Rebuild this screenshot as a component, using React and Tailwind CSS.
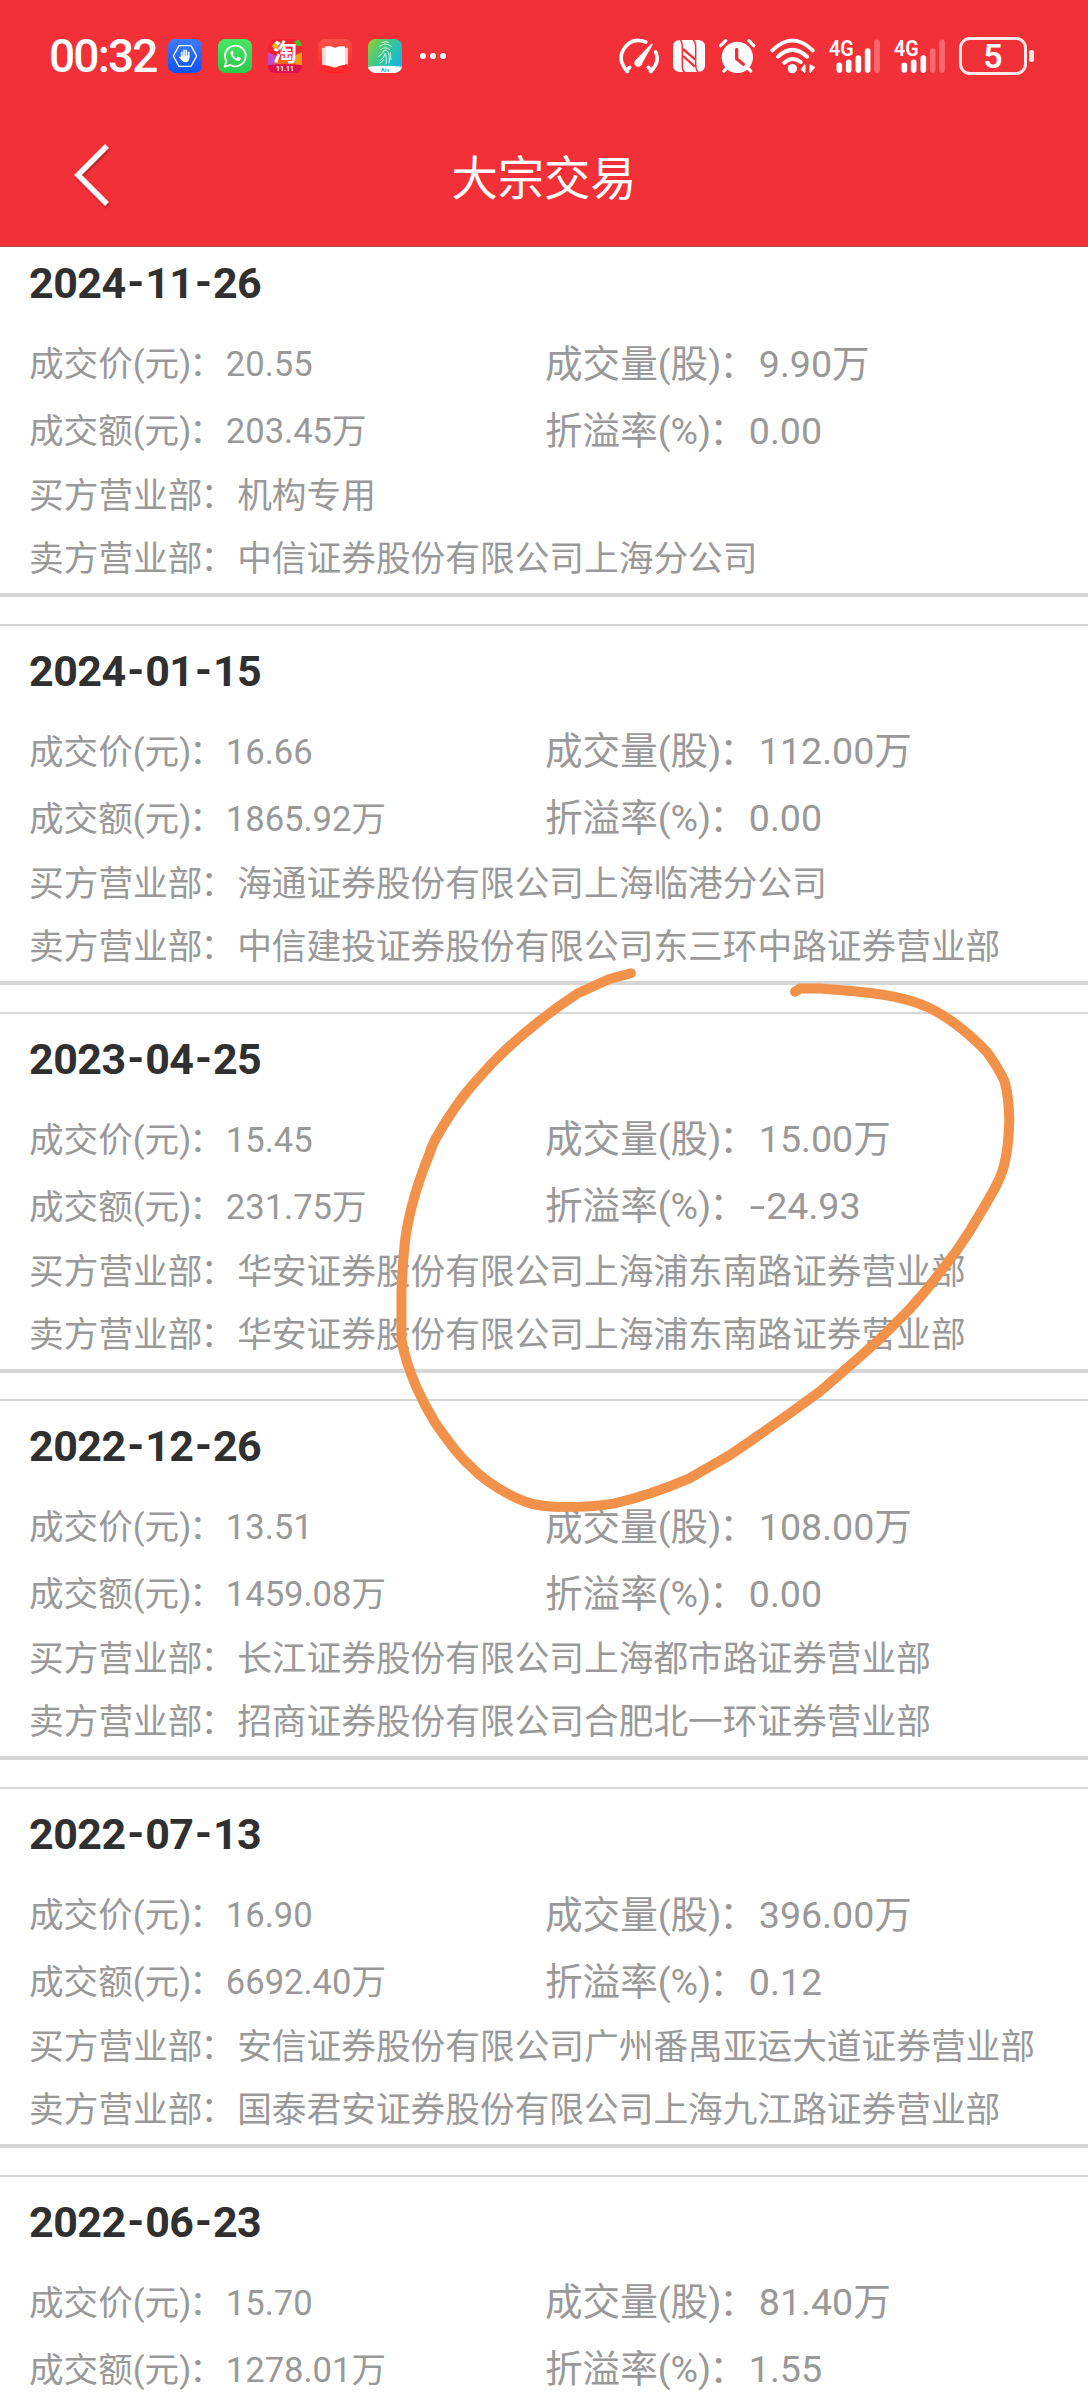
import React from 'react';

const trades = [
  { date: '2024-11-26', price: '20.55', amount: '203.45万', volume: '9.90万', rate: '0.00', buyer: '机构专用', seller: '中信证券股份有限公司上海分公司' },
  { date: '2024-01-15', price: '16.66', amount: '1865.92万', volume: '112.00万', rate: '0.00', buyer: '海通证券股份有限公司上海临港分公司', seller: '中信建投证券股份有限公司东三环中路证券营业部' },
  { date: '2023-04-25', price: '15.45', amount: '231.75万', volume: '15.00万', rate: '-24.93', buyer: '华安证券股份有限公司上海浦东南路证券营业部', seller: '华安证券股份有限公司上海浦东南路证券营业部' },
  { date: '2022-12-26', price: '13.51', amount: '1459.08万', volume: '108.00万', rate: '0.00', buyer: '长江证券股份有限公司上海都市路证券营业部', seller: '招商证券股份有限公司合肥北一环证券营业部' },
  { date: '2022-07-13', price: '16.90', amount: '6692.40万', volume: '396.00万', rate: '0.12', buyer: '安信证券股份有限公司广州番禺亚运大道证券营业部', seller: '国泰君安证券股份有限公司上海九江路证券营业部' },
  { date: '2022-06-23', price: '15.70', amount: '1278.01万', volume: '81.40万', rate: '1.55' },
];

function AppIcons() {
  return (
    <div className="flex gap-4">
      <svg className="h-[34px] w-[34px]" viewBox="0 0 102 102">
        <defs>
          <linearGradient id="blue" x1="0" y1="0" x2="0" y2="1">
            <stop offset="0" stopColor="#3f7bfa" />
            <stop offset="1" stopColor="#0b52f0" />
          </linearGradient>
        </defs>
        <rect width="102" height="102" rx="22" fill="url(#blue)" />
        <path d="M33 20H69L86 51L69 82H33L16 51Z" fill="none" stroke="#fff" strokeWidth="4" strokeLinejoin="round" />
        <path d="M41 54V40M48 52V34M55 52V34M62 54V40" stroke="#fff" strokeWidth="5" strokeLinecap="round" />
        <path d="M39 50H64V60Q62 70 52 70Q46 70 40 63L33 55Q34 51 39 54Z" fill="#fff" />
      </svg>
      <svg className="h-[34px] w-[34px]" viewBox="0 0 102 102">
        <defs>
          <linearGradient id="green" x1="0" y1="0" x2="0" y2="1">
            <stop offset="0" stopColor="#48e665" />
            <stop offset="1" stopColor="#2cc94a" />
          </linearGradient>
        </defs>
        <rect width="102" height="102" rx="22" fill="url(#green)" />
        <path d="M20 83L25 66A31 31 0 1 1 37 78Z" fill="none" stroke="#fff" strokeWidth="5.5" strokeLinejoin="round" />
        <path d="M42 35Q37 36 37 43Q38 52 47 59Q56 67 63 66Q69 64 69 58L60 53L55 58Q48 55 44 47L47 43L44 35Z" fill="#fff" />
      </svg>
      <div className="relative flex h-[34px] w-[34px] flex-col items-center overflow-hidden rounded-[7px] bg-[#fb4a1c]">
        <svg className="absolute inset-0 h-full w-full" viewBox="0 0 102 102">
          <rect width="102" height="102" fill="#f5232f" />
          <circle cx="22" cy="20" r="9" fill="#ffb01f" />
          <path d="M78 8L92 0L102 8V20L88 22Z" fill="#4cb82c" />
          <path d="M0 40L24 52L40 80H0Z" fill="#c44bc8" />
          <path d="M102 38L80 50L68 80H102Z" fill="#ff9a1c" />
          <path d="M20 66L50 56L84 66V80H20Z" fill="#ff6a10" />
          <path d="M0 78Q50 72 102 78V102H0Z" fill="#e0104e" />
        </svg>
        <span className="relative mt-[1px] text-[24px] leading-[26px] font-bold text-white">淘</span>
        <span className="relative text-[7px] leading-[7px] font-bold text-white">11.11</span>
      </div>
      <svg className="h-[34px] w-[34px]" viewBox="0 0 102 102">
        <defs>
          <linearGradient id="red" x1="0" y1="0" x2="0" y2="1">
            <stop offset="0" stopColor="#ff5049" />
            <stop offset="1" stopColor="#ff2529" />
          </linearGradient>
        </defs>
        <rect width="102" height="102" rx="22" fill="url(#red)" />
        <path d="M14 28H88V74H78L50 84L22 76H14Z" fill="#ffd2d0" stroke="#ffd2d0" strokeWidth="4" strokeLinejoin="round" />
        <path d="M22 22L38 22L51 27L64 22H81V78L64 79L51 83L38 79L22 78Z" fill="#fff" />
      </svg>
      <svg className="h-[34px] w-[34px]" viewBox="0 0 102 102">
        <defs>
          <linearGradient id="mix" x1="0" y1="0" x2="1" y2="0.7">
            <stop offset="0" stopColor="#95cf2d" />
            <stop offset="0.5" stopColor="#3cc691" />
            <stop offset="1" stopColor="#12b5e8" />
          </linearGradient>
          <clipPath id="tile">
            <rect width="102" height="102" rx="22" />
          </clipPath>
        </defs>
        <g clipPath="url(#tile)">
          <rect width="102" height="102" fill="url(#mix)" />
          <path d="M0 83Q50 77 102 83V102H0Z" fill="#fff" />
          <g fill="none" stroke="#e8fff4" strokeWidth="2.5" strokeLinecap="round">
            <path d="M43 10Q52 6 62 10M35 22Q52 8 70 22M38 32Q52 20 65 32M32 52Q46 44 48 34Q56 30 61 40Q66 56 64 72M38 64Q48 58 52 42Q56 54 55 74M36 72Q44 68 47 62M67 40L69 62" />
          </g>
          <text x="52" y="98" textAnchor="middle" fontSize="18" fontWeight="700" fontFamily="Roboto, sans-serif" fill="#24b3c4">AI+</text>
        </g>
      </svg>
    </div>
  );
}

function Signal({ strong }) {
  const weak = 'rgba(255,255,255,0.28)';
  return (
    <svg className="h-[36px] w-[51px] overflow-visible" viewBox="0 0 153 108">
      <text x="0" y="53" fontSize="68" fontWeight="600" textLength="74" lengthAdjust="spacingAndGlyphs" fontFamily="Roboto, sans-serif" fill="#fff">4G</text>
      <g strokeWidth="17" strokeLinecap="round">
        <path d="M31 82V96" stroke="#fff" />
        <path d="M59 73V96" stroke="#fff" />
        <path d="M88 60V96" stroke="#fff" />
        <path d="M116 39V96" stroke={strong ? '#fff' : weak} />
        <path d="M144 13V96" stroke={weak} />
      </g>
    </svg>
  );
}

function StatusIcons() {
  return (
    <div className="flex items-center">
      <svg className="h-[36px] w-[40px]" viewBox="0 0 120 108" fill="none" stroke="#fff" strokeLinecap="round">
        <path d="M25 100Q-6 66 14 34Q38 -4 80 12" strokeWidth="11" />
        <path d="M110 42Q124 72 95 100" strokeWidth="11" />
        <path d="M22 98L32 88M98 98L88 88" strokeWidth="11" />
        <path d="M52 64L97 17Q102 15 101 20L70 75A12 12 0 1 1 52 64Z" fill="#fff" stroke="none" />
      </svg>
      <svg className="ml-[14px] h-[36px] w-[32px]" viewBox="0 0 96 108">
        <path d="M22 6H74Q96 6 96 26V82Q96 102 74 102H22Q0 102 0 82V26Q0 6 22 6Z" fill="#fff" />
        <path d="M22 6Q28 12 28 30V86Q28 98 36 103M60 5Q68 12 68 24V78Q68 96 76 103" fill="none" stroke="#f23038" strokeWidth="4.5" />
        <path d="M30 33L66 64M30 54L66 86" fill="none" stroke="#f23038" strokeWidth="7" />
      </svg>
      <svg className="ml-[14px] h-[36px] w-[37px]" viewBox="0 0 111 108" fill="none" stroke="#fff" strokeLinecap="round">
        <circle cx="55" cy="58" r="47" fill="#fff" stroke="none" />
        <path d="M5 23L20 8M104 23L90 8M15 99L25 88M95 99L85 88" strokeWidth="10" />
        <path d="M53 34V62L73 79" stroke="#f23038" strokeWidth="10" />
      </svg>
      <svg className="ml-[14px] h-[36px] w-[46px]" viewBox="0 0 138 108" fill="none" stroke="#fff" strokeLinecap="round">
        <path d="M7 37Q67 -22 128 37M24 56Q67 15 111 56M43 74Q67 53 92 72" strokeWidth="12" />
        <circle cx="67" cy="92" r="14" fill="#fff" stroke="none" />
        <path d="M104 79V105L92 95ZM121 79L136 88L121 105Z" fill="#fff" stroke="none" />
        <path d="M104 82V102M121 82V102" strokeWidth="5" />
      </svg>
      <div className="ml-[13px] flex gap-[14px]">
        <Signal strong />
        <Signal />
      </div>
      <div className="ml-[14px] flex h-[38px] w-[68px] items-center justify-center rounded-[11px] border-[3px] border-white/90 font-[Roboto] text-[34px] leading-none font-semibold text-white">5</div>
      <div className="ml-[2px] h-[12px] w-[5px] rounded-[2px] bg-white/90" />
    </div>
  );
}

function DateTitle({ date }) {
  const [y, m, d] = date.split('-');
  return (
    <div className="flex h-[91px] items-center text-[43px] leading-none font-bold tracking-[-0.5px] text-[#303030]">
      <span>{y}</span>
      <span className="mx-[1.5px] -mt-[2px]">-</span>
      <span>{m}</span>
      <span className="mx-[1.5px] -mt-[2px]">-</span>
      <span>{d}</span>
    </div>
  );
}

function Label({ children }) {
  return (
    <span>
      {children}
      <span className="inline-block -translate-x-[2px]">：</span>
    </span>
  );
}

function Value({ children }) {
  const negative = children.startsWith('-');
  return (
    <span>
      {negative && <span className="mr-[4px] ml-[3px] inline-block scale-x-150">-</span>}
      {negative ? children.slice(1) : children}
    </span>
  );
}

function Pair({ left, right, className }) {
  return (
    <div className={className}>
      <div className="w-[516px] text-[34.6px]"><Label>{left[0]}</Label>{left[1]}</div>
      <div className="text-[37.6px]"><Label>{right[0]}</Label><Value>{right[1]}</Value></div>
    </div>
  );
}

function Trade({ t }) {
  return (
    <article className="h-[361px] shrink-0 border-t-2 border-b-4 border-[#d6d6d6] pl-[29px] leading-none whitespace-nowrap text-[#999]">
      <DateTitle date={t.date} />
      <Pair className="flex h-[68px] items-center pt-[3px]" left={['成交价(元)', t.price]} right={['成交量(股)', t.volume]} />
      <Pair className="flex h-[67px] items-center pt-[2px]" left={['成交额(元)', t.amount]} right={['折溢率(%)', t.rate]} />
      {t.buyer && <div className="flex h-[63px] items-center pt-[2px] text-[34.7px]"><Label>买方营业部</Label>{t.buyer}</div>}
      {t.seller && <div className="flex h-[63px] items-center pt-[2px] text-[34.7px]"><Label>卖方营业部</Label>{t.seller}</div>}
    </article>
  );
}

export default function App() {
  return (
    <div lang="zh-CN" className="relative flex h-[2400px] w-[1088px] flex-col overflow-hidden bg-[#fefefe] font-[Roboto,'Noto_Sans_CJK_SC',sans-serif]">
      <header className="relative z-10 h-[247px] shrink-0 border-b border-[#b8474d] bg-[#f23038]">
        <div className="flex h-[112px] items-center pl-[49px]">
          <span className="w-[119px] font-[Roboto] text-[46px] leading-none font-medium tracking-[-1.8px] text-white">00:32</span>
          <AppIcons />
          <div className="ml-[18px] flex gap-1">
            <i className="h-[6px] w-[6px] rounded-full bg-white" />
            <i className="h-[6px] w-[6px] rounded-full bg-white" />
            <i className="h-[6px] w-[6px] rounded-full bg-white" />
          </div>
          <div className="ml-auto pr-[54px]">
            <StatusIcons />
          </div>
        </div>
        <div className="grid h-[132px] grid-cols-[180px_1fr_180px] items-center">
          <svg className="-mt-[6px] ml-[72px] h-[66px] w-[38px] drop-shadow-[1px_2px_1px_rgba(0,0,0,0.25)]" viewBox="0 0 38 66" fill="none" stroke="#fff" strokeWidth="5.5">
            <path d="M35 4L6 33L35 62" />
          </svg>
          <h1 className="pt-[2px] text-center text-[46.3px] leading-none text-white">大宗交易</h1>
        </div>
      </header>
      <main className="-mt-[11px] flex flex-col gap-[26.75px]">
        {trades.map((t) => <Trade key={t.date} t={t} />)}
      </main>
      <svg className="pointer-events-none absolute top-[940px] left-[380px] h-[600px] w-[660px]" viewBox="0 0 1568 1568" preserveAspectRatio="none" fill="none">
        <path
          d="M596 87L545 102L469 140Q420 175 375 215Q320 262 270 318Q230 365 200 405Q160 465 140 505Q125 530 117 560Q95 620 82 670Q65 735 59 790Q53 860 51 920V1045Q60 1100 85 1165Q105 1215 130 1260Q180 1340 210 1370Q260 1430 345 1468Q380 1482 440 1482Q500 1482 555 1473Q640 1452 735 1407L830 1347Q940 1265 1045 1180Q1130 1100 1180 1050Q1225 1002 1258 965Q1300 915 1335 862Q1370 815 1400 762Q1440 690 1460 650Q1475 620 1482 592Q1494 540 1495 470Q1494 410 1484 370Q1470 335 1442 293Q1410 255 1368 220Q1320 180 1270 162Q1220 145 1170 139Q1110 132 1045 127H998L986 135"
          stroke="#f2924a"
          strokeWidth="10"
          strokeLinecap="round"
          strokeLinejoin="round"
          vectorEffect="non-scaling-stroke"
        />
      </svg>
    </div>
  );
}
